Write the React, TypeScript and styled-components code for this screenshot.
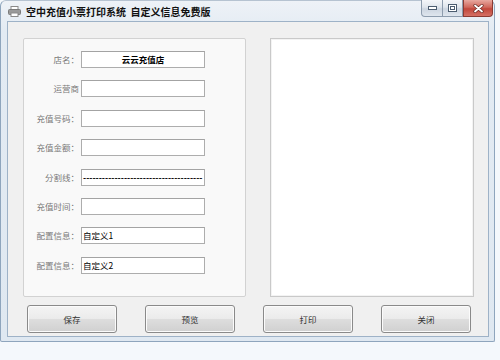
import styled, { createGlobalStyle } from 'styled-components';

const GlobalStyle = createGlobalStyle`
  html, body {
    margin: 0;
    padding: 0;
    background: #f4f8fc;
    font-family: "Noto Sans CJK SC", "Noto Sans", sans-serif;
  }
`;

const Desktop = styled.div`
  width: 500px;
  height: 360px;
  overflow: hidden;
  background: #f4f8fc;
`;

const Window = styled.div`
  width: 495px;
  height: 342px;
  display: flex;
  flex-direction: column;
  background: linear-gradient(#eef2f7, #e3ebf3 30px, #dfe8f1);
  border: 1px solid #8ea5bd;
  border-top-color: #b6c3d1;
  border-radius: 6px 6px 2px 2px;
  box-sizing: border-box;
`;

const TitleBar = styled.div`
  height: 20px;
  display: flex;
  align-items: flex-start;
  padding-left: 7px;
  flex-shrink: 0;
`;

const TitleIcon = styled.svg`
  margin-top: 5px;
  width: 13px;
  height: 11px;
`;

const TitleText = styled.div`
  margin: 4px 0 0 5px;
  font-size: 10px;
  line-height: 14px;
  font-weight: 700;
  color: #111;
  white-space: pre;
`;

const CaptionGroup = styled.div`
  margin-left: auto;
  margin-right: 1px;
  display: flex;
  margin-top: -1px;
`;

const CaptionButton = styled.div<{ $close?: boolean; $w: number }>`
  width: ${p => p.$w}px;
  height: 17px;
  display: flex;
  align-items: center;
  justify-content: center;
  box-sizing: border-box;
  border: 1px solid ${p => (p.$close ? '#8c3b33' : '#8d9cad')};
  border-left-width: ${p => (p.$close ? 1 : 0)}px;
  border-top: none;
  background: ${p =>
    p.$close
      ? 'linear-gradient(#e8a89f, #d0685c 45%, #c2473b 55%, #d57064)'
      : 'linear-gradient(#f4f6f9, #dfe5ec 45%, #ccd5e0 55%, #dfe6ee)'};
  &:first-child {
    border-left-width: 1px;
    border-bottom-left-radius: 4px;
  }
  &:last-child {
    border-bottom-right-radius: 4px;
  }
`;

const Client = styled.div`
  flex: 1;
  margin: 0 5px 4px 6px;
  background: #f0f0f0;
  border: 1px solid #9eb2c7;
  display: flex;
  flex-direction: column;
  padding: 16px 14px 0 15px;
`;

const Panels = styled.div`
  display: flex;
  gap: 24px;
  height: 259px;
`;

const FormPanel = styled.div`
  width: 224px;
  box-sizing: border-box;
  background: #f9f9f9;
  border: 1px solid #d2d2d2;
  border-radius: 2px;
  display: grid;
  grid-template-columns: 55px 124px;
  column-gap: 2px;
  row-gap: 12.4px;
  align-content: start;
  padding: 12px 0 0 0;
`;

const Label = styled.div`
  font-size: 8.5px;
  line-height: 17px;
  color: #7a7a7a;
  text-align: right;
  white-space: nowrap;
`;

const Field = styled.div<{ $center?: boolean; $bold?: boolean }>`
  height: 17px;
  box-sizing: border-box;
  background: #fff;
  border: 1px solid #adadad;
  border-top-color: #a3a3a3;
  font-size: 8.5px;
  line-height: 15px;
  color: #000;
  font-weight: ${p => (p.$bold ? 700 : 400)};
  text-align: ${p => (p.$center ? 'center' : 'left')};
  padding: 0 1px;
  overflow: hidden;
  white-space: nowrap;
`;

const PreviewPanel = styled.div`
  width: 205px;
  box-sizing: border-box;
  background: #fff;
  border: 1px solid #c9c9c9;
  box-shadow: inset 0 0 0 1px #f3f3f3;
`;

const ButtonRow = styled.div`
  display: flex;
  gap: 28px;
  margin: 8px 0 0 4px;
`;

const PushButton = styled.div`
  width: 90px;
  height: 28px;
  box-sizing: border-box;
  border: 1px solid #8a8a8a;
  border-radius: 3px;
  background: linear-gradient(#f4f4f4, #ebebeb 48%, #dddddd 52%, #d0d0d0);
  box-shadow: inset 0 0 0 1px #fbfbfb;
  display: flex;
  align-items: center;
  justify-content: center;
  font-size: 8.5px;
  color: #333;
`;

const rows: { label: string; value?: string; center?: boolean; bold?: boolean }[] = [
  { label: '店名：', value: '云云充值店', center: true, bold: true },
  { label: '运营商 ' },
  { label: '充值号码：' },
  { label: '充值金额：' },
  { label: '分割线：', value: '-'.repeat(38), bold: true },
  { label: '充值时间：' },
  { label: '配置信息：', value: '自定义1' },
  { label: '配置信息：', value: '自定义2' },
];

export default function App() {
  return (
    <Desktop>
      <GlobalStyle />
      <Window>
        <TitleBar>
          <TitleIcon viewBox="0 0 13 11">
            <rect x="3" y="0.5" width="7" height="3" fill="#fff" stroke="#8a8a8a" />
            <rect x="0.5" y="3.5" width="12" height="5" rx="1" fill="#9a9a9a" stroke="#7a7a7a" />
            <rect x="3" y="7" width="7" height="3.5" fill="#fff" stroke="#8a8a8a" />
          </TitleIcon>
          <TitleText>{'空中充值小票打印系统  自定义信息免费版'}</TitleText>
          <CaptionGroup>
            <CaptionButton $w={22}>
              <svg width="9" height="4" viewBox="0 0 9 4">
                <rect x="0.5" y="0.5" width="8" height="3" fill="#fff" stroke="#4c5d70" />
              </svg>
            </CaptionButton>
            <CaptionButton $w={20}>
              <svg width="9" height="8" viewBox="0 0 9 8">
                <rect x="0.5" y="0.5" width="8" height="7" fill="#fff" stroke="#4c5d70" />
                <rect x="2.5" y="2.5" width="4" height="3" fill="none" stroke="#4c5d70" />
              </svg>
            </CaptionButton>
            <CaptionButton $close $w={30}>
              <svg width="11" height="9" viewBox="0 0 11 9">
                <path d="M2 1.5 L9 7.5 M9 1.5 L2 7.5" stroke="#6b2a24" strokeWidth="3.2" strokeLinecap="round" />
                <path d="M2 1.5 L9 7.5 M9 1.5 L2 7.5" stroke="#fff" strokeWidth="1.8" strokeLinecap="round" />
              </svg>
            </CaptionButton>
          </CaptionGroup>
        </TitleBar>
        <Client>
          <Panels>
            <FormPanel>
              {rows.map((r, i) => [
                <Label key={`l${i}`}>{r.label}</Label>,
                <Field key={`f${i}`} $center={r.center} $bold={r.bold}>
                  {r.value}
                </Field>,
              ])}
            </FormPanel>
            <PreviewPanel />
          </Panels>
          <ButtonRow>
            <PushButton>保存</PushButton>
            <PushButton>预览</PushButton>
            <PushButton>打印</PushButton>
            <PushButton>关闭</PushButton>
          </ButtonRow>
        </Client>
      </Window>
    </Desktop>
  );
}
